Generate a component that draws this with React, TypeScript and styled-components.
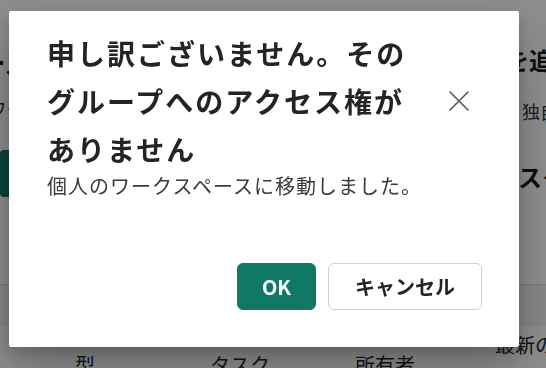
import React from "react";
import styled, { createGlobalStyle } from "styled-components";

const GlobalStyle = createGlobalStyle`
  html, body { margin: 0; padding: 0; }
  body {
    font-family: "Noto Sans CJK JP", "Noto Sans", sans-serif;
    background: #ffffff;
    color: #252423;
    overflow: hidden;
  }
`;

const Page = styled.div`
  width: 546px;
  height: 368px;
  overflow: hidden;
  background: #ffffff;
  display: flex;
  flex-direction: column;
`;

const Top = styled.div`
  height: 284px;
  display: flex;
  justify-content: space-between;
`;

const LeftPane = styled.div`
  width: 60px;
  display: flex;
  flex-direction: column;
  align-items: flex-end;
  overflow: hidden;
  padding-top: 42px;
`;

const RightPane = styled.div`
  width: 41px;
  display: flex;
  flex-direction: column;
  padding-top: 44px;
  overflow: hidden;
`;

const BigHeading = styled.div`
  font-size: 28px;
  font-weight: 700;
  line-height: 40px;
  white-space: nowrap;
  color: #1b1a19;
`;

const SubText = styled.div<{ $mt?: number; $ml?: number }>`
  font-size: 18px;
  line-height: 24px;
  white-space: nowrap;
  color: #323130;
  margin-top: ${(p) => p.$mt ?? 0}px;
  margin-left: ${(p) => p.$ml ?? 0}px;
`;

const SectionTitle = styled.div<{ $mt?: number; $ml?: number }>`
  font-size: 24px;
  font-weight: 700;
  line-height: 32px;
  white-space: nowrap;
  color: #1b1a19;
  margin-top: ${(p) => p.$mt ?? 0}px;
  margin-left: ${(p) => p.$ml ?? 0}px;
`;

const GreenBlock = styled.div`
  width: 60px;
  height: 47px;
  background: #117865;
  border-radius: 4px;
  margin-top: 30px;
`;

const Divider = styled.div`
  height: 1px;
  background: #e1dfdd;
`;

const HoverRow = styled.div`
  height: 41px;
  background: #f3f2f1;
`;

const HeaderRow = styled.div`
  display: grid;
  grid-template-columns: 75px 135px 145px 140px 1fr;
  align-items: end;
  font-size: 20px;
  line-height: 26px;
  color: #252423;
  padding-top: 6px;
`;

const HeaderCell = styled.div<{ $shift?: number }>`
  white-space: nowrap;
  transform: translateY(${(p) => p.$shift ?? 0}px);
`;

const Overlay = styled.div`
  position: fixed;
  inset: 0;
  background: rgba(0, 0, 0, 0.45);
  padding: 11px 0 0 9px;
  box-sizing: border-box;
`;

const Dialog = styled.div`
  width: 510px;
  height: 336px;
  box-sizing: border-box;
  background: #ffffff;
  border-radius: 2px;
  box-shadow: 0 26px 46px rgba(0, 0, 0, 0.22), 0 5px 14px rgba(0, 0, 0, 0.18);
  padding: 18px 37px 37px 38px;
  display: flex;
  flex-direction: column;
`;

const HeaderBar = styled.div`
  display: flex;
  align-items: center;
`;

const Title = styled.h1`
  flex: 1;
  margin: 0;
  font-size: 28px;
  line-height: 48px;
  letter-spacing: 2px;
  font-weight: 700;
  color: #252423;
`;

const CloseButton = styled.button`
  width: 46px;
  height: 46px;
  flex-shrink: 0;
  border: none;
  background: transparent;
  padding: 0;
  display: flex;
  align-items: center;
  justify-content: center;
  color: #555555;
  cursor: pointer;
`;

const Message = styled.p`
  margin: 0;
  font-size: 20px;
  line-height: 26px;
  letter-spacing: 1px;
  color: #3b3a39;
`;

const Footer = styled.div`
  margin-top: auto;
  display: flex;
  justify-content: flex-end;
  gap: 12px;
`;

const Button = styled.button<{ $primary?: boolean }>`
  height: 47px;
  min-width: ${(p) => (p.$primary ? 79 : 154)}px;
  box-sizing: border-box;
  border-radius: 6px;
  font-family: "Noto Sans CJK JP", "Noto Sans", sans-serif;
  font-size: 20px;
  font-weight: 700;
  padding: 0 20px;
  cursor: pointer;
  border: 1px solid ${(p) => (p.$primary ? "#117865" : "#d1d1d1")};
  background: ${(p) => (p.$primary ? "#117865" : "#ffffff")};
  color: ${(p) => (p.$primary ? "#ffffff" : "#252423")};
`;

export default function App() {
  return (
    <>
      <GlobalStyle />
      <Page>
        <Top>
          <LeftPane>
            <BigHeading>ワークスペースニ</BigHeading>
            <SubText $mt={14}>ワークス</SubText>
            <GreenBlock />
          </LeftPane>
          <RightPane>
            <SectionTitle>を追加</SectionTitle>
            <SubText $mt={23} $ml={17}>独自の</SubText>
            <SectionTitle $mt={38} $ml={13}>スク</SectionTitle>
          </RightPane>
        </Top>
        <Divider />
        <HoverRow />
        <HeaderRow>
          <div />
          <HeaderCell $shift={20}>型</HeaderCell>
          <HeaderCell $shift={20}>タスク</HeaderCell>
          <HeaderCell $shift={20}>所有者</HeaderCell>
          <HeaderCell>最新の</HeaderCell>
        </HeaderRow>
      </Page>
      <Overlay>
        <Dialog role="dialog" aria-modal="true">
          <HeaderBar>
            <Title>
              申し訳ございません。その
              <br />
              グループへのアクセス権が
              <br />
              ありません
            </Title>
            <CloseButton aria-label="閉じる">
              <svg width="20" height="20" viewBox="0 0 20 20" fill="none">
                <path d="M1 1L19 19M19 1L1 19" stroke="currentColor" strokeWidth="1.6" strokeLinecap="round" />
              </svg>
            </CloseButton>
          </HeaderBar>
          <Message>個人のワークスペースに移動しました。</Message>
          <Footer>
            <Button $primary>OK</Button>
            <Button>キャンセル</Button>
          </Footer>
        </Dialog>
      </Overlay>
    </>
  );
}
